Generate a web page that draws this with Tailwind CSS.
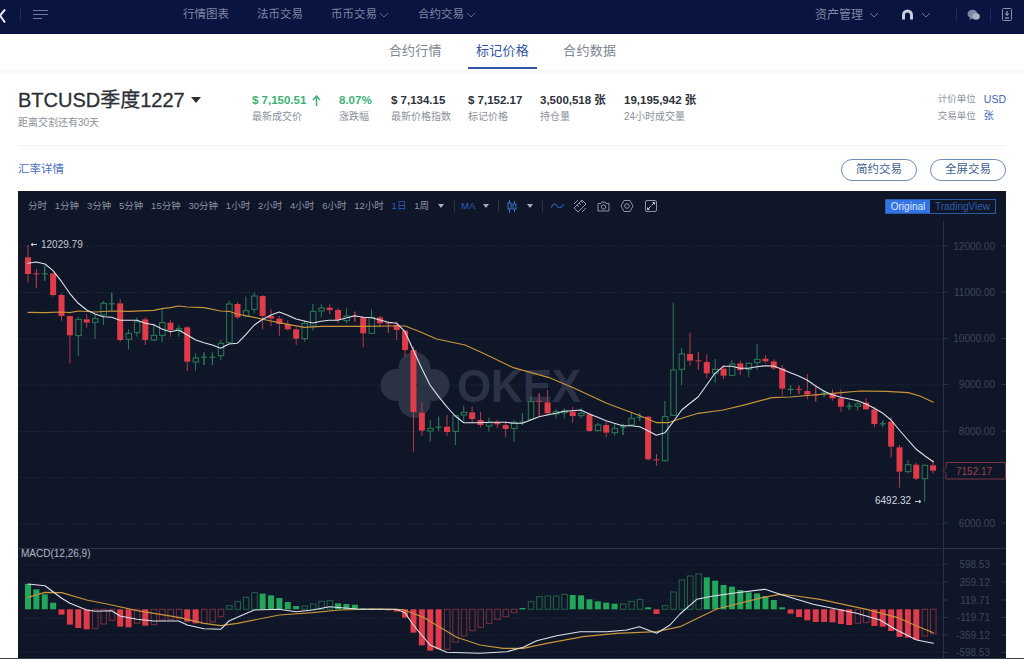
<!DOCTYPE html>
<html lang="zh">
<head>
<meta charset="utf-8">
<script src="https://cdn.jsdelivr.net/npm/@tailwindcss/browser@4"></script>
</head>
<body class="w-[1024px] h-[659px] overflow-hidden bg-white font-['Liberation_Sans','Noto_Sans_CJK_SC',sans-serif] relative">
<header class="h-[34px] pb-[5px] bg-[#0a1440] flex items-center text-[#7e88a6] text-[11.5px] relative">
  <svg class="absolute left-0 top-[9px]" width="6" height="14" viewBox="0 0 6 14"><path d="M5 0.500L0 6.500L5 13.500" stroke="#e8ebf3" stroke-width="2" fill="none"/></svg>
  <span class="ml-[20px] w-px h-[13px] bg-[#232c55]"></span>
  <svg class="ml-[12px]" width="15" height="12" viewBox="0 0 15 12"><path d="M0 1.500H15M0 5.500H15M0 9.500H9" stroke="#6f7896" stroke-width="1.200"/></svg>
  <nav class="ml-[135px] flex items-center">
    <span class="w-[74px]">行情图表</span>
    <span class="w-[74px]">法币交易</span>
    <span class="w-[87px] flex items-center gap-[2px]">币币交易<svg width="10" height="6" viewBox="0 0 10 6"><path d="M1 1L5 5L9 1" stroke="#5c6685" fill="none"/></svg></span>
    <span class="flex items-center gap-[2px]">合约交易<svg width="10" height="6" viewBox="0 0 10 6"><path d="M1 1L5 5L9 1" stroke="#5c6685" fill="none"/></svg></span>
  </nav>
  <div class="ml-auto flex items-center">
    <span class="text-[12px]">资产管理</span>
    <svg class="ml-[6px]" width="10" height="6" viewBox="0 0 10 6"><path d="M1 1L5 5L9 1" stroke="#6a7492" fill="none"/></svg>
    <svg class="ml-[22px]" width="13" height="11" viewBox="0 0 13 11"><path d="M2.500 10.500V6A4 4 0 0 1 10.500 6V10.500" stroke="#c9cedd" stroke-width="3" fill="none"/></svg>
    <svg class="ml-[7px]" width="10" height="6" viewBox="0 0 10 6"><path d="M1 1L5 5L9 1" stroke="#6a7492" fill="none"/></svg>
    <span class="ml-[25px] w-px h-[13px] bg-[#232c55]"></span>
    <svg class="ml-[10px]" width="13" height="12" viewBox="0 0 13 12"><ellipse cx="5.500" cy="5" rx="5" ry="4.300" fill="#7e88a6"/><ellipse cx="9" cy="7.500" rx="3.800" ry="3.200" fill="#aab1c6"/><path d="M3 8L2.500 11L6 9Z" fill="#7e88a6"/></svg>
    <span class="ml-[10px] w-px h-[13px] bg-[#232c55]"></span>
    <svg class="ml-[11px] mr-[12px]" width="10" height="13" viewBox="0 0 10 13"><rect x="0.500" y="0.500" width="9" height="12" rx="1" stroke="#8a93ad" fill="none"/><path d="M5 3V7M3.200 5.500L5 7.500L6.800 5.500M3 10H7" stroke="#c0c6d6"/></svg>
  </div>
</header>
<div class="h-[36px] flex justify-center gap-[19px] pr-[19px] text-[13px] text-[#7d8590] shadow-[0_2px_4px_rgba(20,30,60,0.06)] relative">
  <span class="h-[35px] flex items-center tracking-[0.3px] px-[7.500px] border-b-2 border-transparent">合约行情</span>
  <span class="h-[35px] flex items-center tracking-[0.3px] px-[7.500px] text-[#2f55a4] border-b-2 border-[#2f55a4]">标记价格</span>
  <span class="h-[35px] flex items-center tracking-[0.3px] px-[7.500px] border-b-2 border-transparent">合约数据</span>
</div>
<section class="mx-[18px] h-[76px] border-b border-[#eef0f3] flex pt-[20px]">
  <div class="w-[234px]">
    <div class="flex items-center h-[20px] text-[#2b2f36] text-[20px] leading-none [-webkit-text-stroke:0.3px_#2b2f36]">BTCUSD季度1227<svg class="ml-[6px]" width="10" height="6" viewBox="0 0 10 6"><path d="M0 0H10L5 6Z" fill="#2b2f36"/></svg></div>
    <div class="mt-[6px] text-[10px] text-[#8b9199] leading-[14px]">距离交割还有30天</div>
  </div>
  <div class="flex text-[11.5px] font-bold text-[#2d3138] leading-[20px]">
    <div class="w-[87px]"><div class="text-[#3bb273] flex items-center">$ 7,150.51<svg class="ml-[6px]" width="9" height="11" viewBox="0 0 9 11"><path d="M4.500 11V1.500M1 5L4.500 1L8 5" stroke="#3bb273" stroke-width="1.500" fill="none"/></svg></div><div class="text-[10px] font-normal text-[#8b9199] leading-[12px] mt-[1px]">最新成交价</div></div>
    <div class="w-[52px]"><div class="text-[#3bb273]">8.07%</div><div class="text-[10px] font-normal text-[#8b9199] leading-[12px] mt-[1px]">涨跌幅</div></div>
    <div class="w-[77px]"><div>$ 7,134.15</div><div class="text-[10px] font-normal text-[#8b9199] leading-[12px] mt-[1px]">最新价格指数</div></div>
    <div class="w-[72px]"><div>$ 7,152.17</div><div class="text-[10px] font-normal text-[#8b9199] leading-[12px] mt-[1px]">标记价格</div></div>
    <div class="w-[84px]"><div>3,500,518 张</div><div class="text-[10px] font-normal text-[#8b9199] leading-[12px] mt-[1px]">持仓量</div></div>
    <div><div>19,195,942 张</div><div class="text-[10px] font-normal text-[#8b9199] leading-[12px] mt-[1px]">24小时成交量</div></div>
  </div>
  <div class="ml-auto text-[9.500px] leading-[16.500px] text-[#8b9199] pt-[1px]">
    <div class="flex gap-[8px]"><span>计价单位</span><span class="text-[#3a63b8] text-[10.500px]">USD</span></div>
    <div class="flex gap-[8px]"><span>交易单位</span><span class="text-[#3a63b8] text-[10px] w-[21px]">张</span></div>
  </div>
</section>
<div class="mx-[18px] h-[45px] pt-[3px] flex items-center justify-between">
  <span class="text-[11.500px] text-[#4a70c4]">汇率详情</span>
  <div class="flex gap-[13px]">
    <span class="w-[76px] h-[22px] rounded-full border border-[#6f8db5] text-[#3f5f92] text-[11.500px] flex items-center justify-center">简约交易</span>
    <span class="w-[76px] h-[22px] rounded-full border border-[#6f8db5] text-[#3f5f92] text-[11.500px] flex items-center justify-center">全屏交易</span>
  </div>
</div>
<div class="mx-[18px] h-[467px] bg-[#0f1628] overflow-hidden">
  <div class="h-[30px] flex items-center pl-[10px] text-[9.500px] text-[#8d94a5] relative">
    <div class="flex items-center gap-[7.800px]">
      <span>分时</span><span>1分钟</span><span>3分钟</span><span>5分钟</span><span>15分钟</span><span>30分钟</span><span>1小时</span><span>2小时</span><span>4小时</span><span>6小时</span><span>12小时</span><span class="text-[#2f5fb8]">1日</span><span>1周</span>
    </div>
    <svg class="ml-[9px]" width="6" height="4" viewBox="0 0 6 4"><path d="M0 0H6L3 4Z" fill="#a8aebb"/></svg>
    <span class="ml-[10px] w-px h-[12px] bg-[#2a3245]"></span>
    <span class="ml-[6px] text-[#2f5fb8]">MA</span>
    <svg class="ml-[8px]" width="6" height="4" viewBox="0 0 6 4"><path d="M0 0H6L3 4Z" fill="#a8aebb"/></svg>
    <span class="ml-[9px] w-px h-[12px] bg-[#2a3245]"></span>
    <svg class="ml-[8px]" width="10" height="13" viewBox="0 0 10 13"><path d="M2.500 0V13M7.500 1V12" stroke="#3f73d0"/><rect x="1" y="3" width="3" height="6" fill="#0f1628" stroke="#3f73d0"/><rect x="6" y="4" width="3" height="5" fill="#0f1628" stroke="#3f73d0"/></svg>
    <svg class="ml-[10px]" width="6" height="4" viewBox="0 0 6 4"><path d="M0 0H6L3 4Z" fill="#a8aebb"/></svg>
    <span class="ml-[9px] w-px h-[12px] bg-[#2a3245]"></span>
    <svg class="ml-[8px]" width="13" height="8" viewBox="0 0 13 8"><path d="M0 6C2 1 4 1 6 4S10 6 13 2" stroke="#2f5fb8" fill="none" stroke-width="1.100"/></svg>
    <svg class="ml-[9px]" width="14" height="14" viewBox="0 0 14 14"><path d="M1 9L9 1L13 5L5 13Z M4 6L6 8M6 4L8 6M8 2L10 4M1 5L5 1M9 13L13 9" stroke="#8d94a5" fill="none"/></svg>
    <svg class="ml-[10px]" width="13" height="11" viewBox="0 0 13 11"><path d="M1 2.500H4L5 1H8L9 2.500H12V10H1Z" stroke="#8d94a5" fill="none"/><circle cx="6.500" cy="6" r="2.200" stroke="#8d94a5" fill="none"/></svg>
    <svg class="ml-[10px]" width="14" height="14" viewBox="0 0 14 14"><path d="M4 1.500H10L13 7L10 12.500H4L1 7Z" stroke="#8d94a5" fill="none"/><circle cx="7" cy="7" r="2.300" stroke="#8d94a5" fill="none"/></svg>
    <svg class="ml-[11px]" width="12" height="12" viewBox="0 0 12 12"><rect x="0.500" y="0.500" width="11" height="11" rx="1.500" stroke="#8d94a5" fill="none"/><path d="M6.500 5.500L9.500 2.500M7.500 2.500H9.500V4.500M5.500 6.500L2.500 9.500M2.500 7.500V9.500H4.500" stroke="#c0c4ce" fill="none"/></svg>
    <div class="absolute left-[867px] top-[8px] w-[111px] h-[15px] flex border border-[#2a5aa8] text-[10px] leading-[13px]">
      <span class="w-[44px] bg-[#3273e6] text-[#dfe9fb] text-center">Original</span>
      <span class="flex-1 text-[#2f5fa8] text-center">TradingView</span>
    </div>
  </div>
  <svg id="chart" class="block" width="988" height="437" viewBox="18 221 988 437" font-family="Liberation Sans, sans-serif"></svg>
</div>
<div class="absolute left-0 right-0 bottom-0 h-px bg-[#3a3f4a]"></div>
<script>
const X=i=>28+8.38*i;
const C=[
'r,15,52,102,128','rd,88,100,102,143','gd,78,100,103,122','r,98,100,165,170','r,160,165,228,242','r,228,228,286,370','g,230,238,287,348','r,222,238,248,263','g,222,236,247,297','g,183,190,225,255','gd,158,190,192,212','r,177,190,300,305','g,268,280,298,328','g,232,245,278,290','r,232,238,300,315','g,250,286,300,303','g,205,248,286,307','r,240,248,270,290','g,255,265,272,290','r,258,262,365,393','g,340,354,366,392','gd,338,350,352,375','gd,338,350,352,375','g,300,310,347,360','g,182,192,308,310','r,187,192,232,237','g,170,212,228,232','g,158,168,208,220','r,165,168,228,268','r,208,228,236,258','r,228,236,252,287','r,240,252,268,272','r,262,268,296,315','g,240,250,296,305','g,192,214,258,272','g,193,204,213,232','r,193,203,210,222','r,205,210,240,250'
];
const D=[
'g,55,78,92,100','rd,65,78,82,95','r,78,82,130,172','g,58,82,130,132','r,78,82,100,112','rd,95,98,102,128','r,95,105,120,150','r,120,122,180,200','r,170,180,366,485','r,335,368,422,438','g,390,415,423,455','gd,380,410,413,422','r,375,410,426,437','g,375,377,424,465','g,347,367,375,392','r,350,367,387,398','r,365,390,405,412','g,383,398,408,425','r,390,397,403,415','r,395,405,417,442','g,390,397,415,455','gd,370,395,398,405','g,318,335,388,390','rd,310,333,337,378','r,300,337,370,375','g,357,365,372,385','g,355,363,368,385','r,350,365,378,398','g,355,370,377,385','r,368,373,423,425','g,398,405,422,425','r,395,405,428,442','g,402,415,428,437','gd,402,410,413,435','g,365,385,405,408','gd,370,380,383,392','r,378,380,508,512','rd,492,508,511,527','g,333,380,512,515','g,38,240,376,378',
'g,175,192,238,285','r,128,192,212,228','rd,187,211,215,240','r,193,216,250,265','g,207,238,250,278','r,225,236,257,267','g,210,222,256,258','r,212,220,240,255','g,218,220,238,262','g,162,208,218,240','r,195,206,214,220','r,208,214,235,240','r,225,235,296,317','gd,285,297,300,312','rd,287,297,300,312','r,252,303,314,328','rd,290,314,317,335','gd,300,308,311,320','r,298,312,325,332','r,298,325,350,365','gd,338,347,350,360','g,332,342,349,362','r,325,338,358,360','r,350,358,402,412','gd,392,400,403,410','r,382,395,470,502','r,465,472,545,593','g,510,524,545,550','r,518,524,566,570','g,524,526,566,635','r,510,526,542,550'
];
const conv=(s,y0)=>{const p=s.split(',');return [p[0],...p.slice(1).map(v=>y0+v/3)]};
const all=[...C.map(s=>conv(s,240)),...D.map(s=>conv(s,290))];
const RED='#e03b4a',RW='#b8394a',GW='#2b7d58';
let out='';
[246,292.500,339,385,431.500,477.500,524].forEach(y=>out+=`<path d="M18 ${y}H943" stroke="#283044" stroke-dasharray="1 2"/>`);
[565,583,600,618,635,652].forEach(y=>out+=`<path d="M18 ${y}H943" stroke="#252c40" stroke-dasharray="1 2"/>`);
out+=`<g fill="#2b3246"><circle cx="414.500" cy="368" r="16"/><circle cx="396.500" cy="385" r="16"/><circle cx="433.500" cy="385" r="16"/><circle cx="414.500" cy="402" r="16"/></g><text x="457" y="402" font-size="46" font-weight="700" fill="#2b3246" textLength="124" lengthAdjust="spacingAndGlyphs">OKEX</text>`;
all.forEach((c,i)=>{const x=X(i),[t,wt,bt,bb,wb]=c;const red=t[0]==='r',col=red?RW:GW;
 out+=`<path d="M${x} ${wt}V${Math.max(bt,wt)}M${x} ${bb}V${wb}" stroke="${col}"/>`;
 if(t.length>1){out+=`<path d="M${x} ${wt}V${wb}" stroke="${col}"/><path d="M${x-3} ${bt+0.5}H${x+3}" stroke="${col}" stroke-width="1.200"/>`}
 else if(red){out+=`<rect x="${x-3}" y="${bt}" width="6" height="${bb-bt}" fill="${RED}"/>`}
 else{out+=`<rect x="${x-2.500}" y="${bt}" width="5.500" height="${bb-bt}" fill="#0f1628" stroke="${GW}"/>`}
});
const pts=(s,x0,y0)=>s.trim().split(/\s+/).map(p=>{const [a,b]=p.split(',');return (x0+a/3).toFixed(1)+','+(y0+b/3).toFixed(1)}).join(' ');
const line=(segs,col,w)=>`<polyline points="${segs.join(' ')}" fill="none" stroke="${col}" stroke-width="${w}" stroke-linejoin="round" stroke-linecap="round"/>`;
out+=line([
 pts('84,217 135,218 185,216 209,218 235,213 285,216 335,213 386,214 461,211 486,206 511,203 536,198 562,201 612,203 662,213 687,214 712,222 763,232 813,243 863,253 913,262 963,259 1013,259',0,240),
 pts('70,109 145,108 195,108 240,125 290,147 375,165 430,190 520,233 625,262 700,293 800,340 900,377 950,398 985,398',340,290),
 pts('40,393 65,385 115,370 190,360 260,343 335,323 390,321 460,315 520,310 600,303 680,304 745,308 780,318 820,337',660,290)],'#c9943a',1.200);
out+=line([
 pts('84,70 109,66 135,72 159,92 185,125 209,160 235,190 260,210 285,222 310,230 335,232 360,241 386,241 411,241 436,250 461,254 486,267 511,275 536,270 562,285 587,300 612,308 637,315 662,325 687,312 712,310 738,283 763,255 788,238 813,225 838,216 863,226 888,237 913,243 938,249 963,244 988,241 1013,241',0,240),
 pts('44,77 69,82 95,83 120,90 145,97 170,100 195,125 220,180 245,235 270,285 296,320 320,350 346,378 371,398 396,398 421,398 447,397 472,397 497,397 522,400 547,400 572,390 597,380 622,375 647,370 672,364 697,362 722,360 748,372 773,382 798,392 823,400 848,407 874,407 899,410 924,422 949,436 975,428',340,290),
 pts('40,395 65,360 90,340 115,320 140,285 165,250 190,229 215,229 240,235 265,235 291,230 316,227 341,228 366,238 391,248 416,258 441,270 466,287 491,303 517,314 542,322 568,327 593,332 618,342 643,355 669,370 693,390 718,420 744,450 769,478 795,498 820,515',660,290)],'#dfe3ea',1.100);
const M=[
'gf132','gf148','gf163','gf188','rf224','rf254','rf264','rf268','rh266','rh252','rh241','rf260','rf262','rh250','rf257','rh254','rh240','rh238','rh236','rf245','rf250','rh250','rh246','rh230','gh197','gh185','gh172','gh158','gf161','gf166','gf174','gf186','gf198','gh198','gh192','gh184','gh182','gf190',
'gf192','gf194','gf205','gf206','gf206','rf211','rf215','rf233','rf278','rf316','rf332','rf328','rh328','rh306','rh288','rh272','rh262','rh250','rh238','rh230','rh218','gf204','gh185','gh170','gh168','gh168','gh163','gf165','gf166','gf178','gf184','gf188','gf191','gh192','gh184','gh178','gf202','rf222','gh197','gh156',
'gh120','gh108','gh102','gf112','gf122','gf135','gf140','gf150','gf157','gf160','gf168','gf180','gf202','rf221','rf231','rf241','rf246','rf246','rf247','rf252','rf255','rh250','rh248','rf258','rf260','rf273','rf291','rf293','rf300','rh288','rh281'];
M.forEach((m,i)=>{const x=X(i),k=m.slice(0,2),v=540+(+m.slice(2))/3,z=609.300;const top=Math.min(v,z),h=Math.abs(v-z);
 if(k[1]==='f')out+=`<rect x="${x-3}" y="${top}" width="6" height="${h}" fill="${k[0]==='r'?RED:'#22a65a'}"/>`;
 else out+=`<rect x="${x-2.500}" y="${top}" width="5.500" height="${h}" fill="none" stroke="${k[0]==='r'?'#7a3040':'#246348'}"/>`;
});
out+=line([
 pts('84,172 135,157 185,158 260,180 335,195 411,212 536,232 612,250 662,257 712,250 838,225 938,218',0,540),
 pts('0,210 100,207 190,209 250,232 300,262 350,292 420,315 490,325 550,325 620,310 730,290 830,280 950,275',340,540),
 pts('0,260 110,207 250,172 300,163 350,168 420,178 560,208 650,232 710,258 760,278',680,540)],'#c9943a',1.200);
out+=line([
 pts('84,132 135,137 159,155 185,175 210,190 260,210 285,214 335,212 360,228 411,238 461,243 536,243 562,255 612,266 662,268 687,243 712,232 763,210 838,208 888,215 938,210 988,200',0,540),
 pts('60,208 170,208 195,218 220,255 270,315 320,337 420,340 500,335 550,322 590,302 650,287 720,275 800,275 860,270 898,260 950,280 990,255',340,540),
 pts('0,222 50,178 100,168 170,158 255,148 300,163 400,193 530,220 600,240 650,270 710,300 760,310',680,540)],'#dfe3ea',1.100);
out+=`<path d="M943.500 221V658" stroke="#2a3245"/><path d="M18 548.500H1006" stroke="#2a3245"/>`;
[['12000.00',246],['11000.00',292],['10000.00',338.500],['9000.00',384.500],['8000.00',431],['7000.00',477],['6000.00',523]].forEach(([t,y])=>{
 out+=`<path d="M944 ${y}H948M1001 ${y}H1006" stroke="#2a3245"/>`;
 if(t!=='7000.00')out+=`<text x="995" y="${y+3.500}" text-anchor="end" font-size="10" fill="#3e4659">${t}</text>`;
});
[['598.53',564],['359.12',582],['119.71',600],['-119.71',617.500],['-359.12',635],['-598.53',652.500]].forEach(([t,y])=>{
 out+=`<path d="M944 ${y}H948M1001 ${y}H1006" stroke="#2a3245"/><text x="990" y="${y+3.500}" text-anchor="end" font-size="10" fill="#3e4659">${t}</text>`;
});
out+=`<path d="M31 244.500H37M31 244.500L33 243M31 244.500L33 246" stroke="#c8ccd6" fill="none"/><text x="41" y="247.500" font-size="10" fill="#c3c7d2">12029.79</text>`;
out+=`<text x="875" y="503.500" font-size="10" fill="#d5d8e0">6492.32</text><path d="M915 501.500H921M921 501.500L919 500M921 501.500L919 503" stroke="#c8ccd6" fill="none"/>`;
out+=`<path d="M946 462.500H1005.500V479H946V473.500L943 470.500L946 467.500Z" fill="#0f1628" stroke="#803544"/><text x="956" y="474.500" font-size="10" fill="#9c3f4d">7152.17</text>`;
out+=`<text x="21" y="557" font-size="10" fill="#b4b8c3">MACD(12,26,9)</text>`;
document.getElementById('chart').innerHTML=out;
</script>
</body>
</html>
